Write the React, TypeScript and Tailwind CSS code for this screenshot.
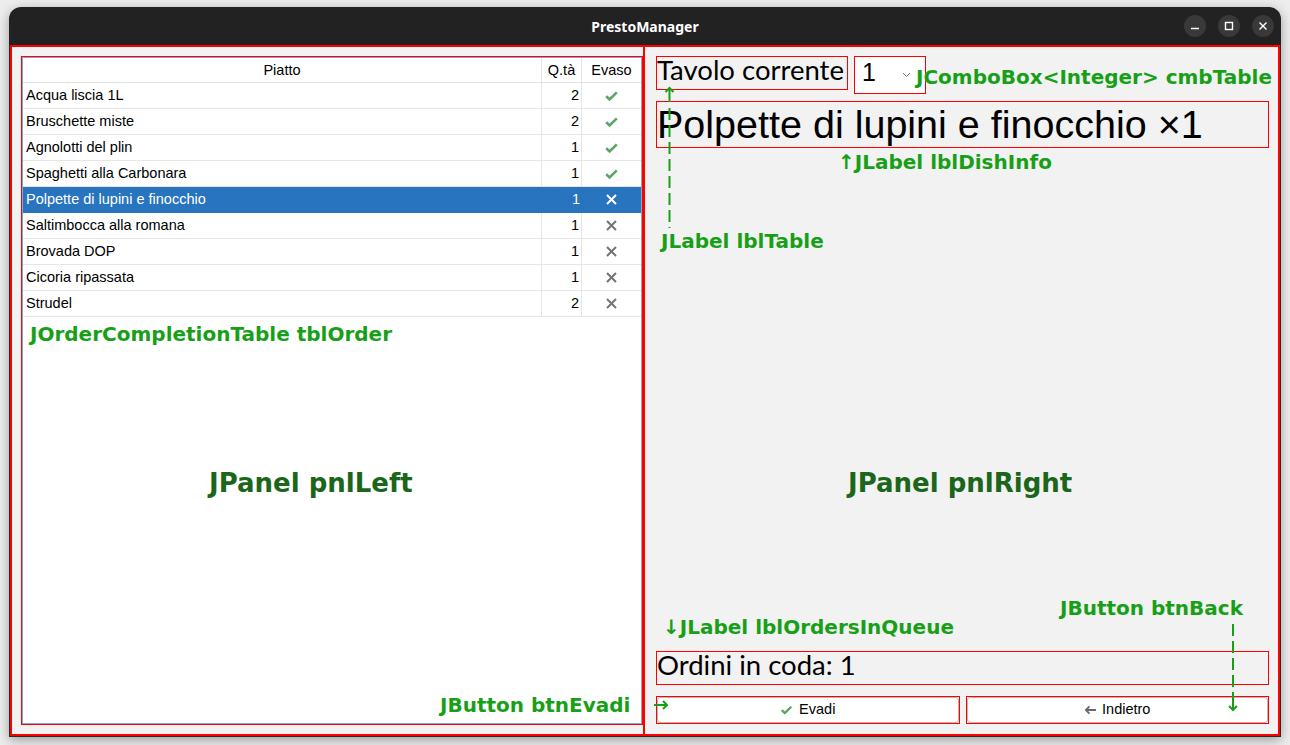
import React from "react";

type Row = { name: string; qty: number; done: boolean; sel?: boolean };

const rows: Row[] = [
  { name: "Acqua liscia 1L", qty: 2, done: true },
  { name: "Bruschette miste", qty: 2, done: true },
  { name: "Agnolotti del plin", qty: 1, done: true },
  { name: "Spaghetti alla Carbonara", qty: 1, done: true },
  { name: "Polpette di lupini e finocchio", qty: 1, done: false, sel: true },
  { name: "Saltimbocca alla romana", qty: 1, done: false },
  { name: "Brovada DOP", qty: 1, done: false },
  { name: "Cicoria ripassata", qty: 1, done: false },
  { name: "Strudel", qty: 2, done: false },
];

function Check({ className = "" }: { className?: string }) {
  return (
    <svg width="13" height="10" viewBox="0 0 13 10" className={className}>
      <path d="M1.2 5.2 L4.6 8.4 L11.8 1.4" fill="none" stroke="currentColor" strokeWidth="2.6" strokeLinejoin="miter" />
    </svg>
  );
}

function Cross({ className = "" }: { className?: string }) {
  return (
    <svg width="11" height="11" viewBox="0 0 11 11" className={className}>
      <path d="M1 1 L10 10 M10 1 L1 10" fill="none" stroke="currentColor" strokeWidth="2" />
    </svg>
  );
}

const ann = "absolute whitespace-nowrap font-bold text-[20px] leading-[24px] text-[#17a017] [font-family:'DejaVu_Sans',sans-serif]";
const annBig = "absolute whitespace-nowrap font-bold text-[26px] leading-[30px] text-[#1b661b] [font-family:'DejaVu_Sans',sans-serif]";

export default function App() {
  return (
    <div className="relative w-[1290px] h-[745px] overflow-hidden bg-[#ededed] pt-[7px] pl-[9px]">
      <div className="w-[1272px] h-[730px] flex flex-col rounded-t-[12px] overflow-hidden shadow-[0_3px_12px_rgba(0,0,0,0.35)]">
        {/* Title bar */}
        <div className="h-[38px] bg-[#222222] grid grid-cols-[1fr_auto_1fr] items-center">
          <div />
          <div className="text-white font-bold text-[14px] [font-family:'Noto_Sans',sans-serif]">PrestoManager</div>
          <div className="flex justify-end gap-[12px] pr-[7px]">
            <div className="w-[22px] h-[22px] rounded-full bg-[#393939] flex items-center justify-center">
              <svg width="10" height="10" viewBox="0 0 10 10"><path d="M1 7.5 H9" stroke="white" strokeWidth="1.4" /></svg>
            </div>
            <div className="w-[22px] h-[22px] rounded-full bg-[#393939] flex items-center justify-center">
              <svg width="10" height="10" viewBox="0 0 10 10"><rect x="1.5" y="1.5" width="7" height="7" fill="none" stroke="white" strokeWidth="1.4" /></svg>
            </div>
            <div className="w-[22px] h-[22px] rounded-full bg-[#393939] flex items-center justify-center">
              <svg width="10" height="10" viewBox="0 0 10 10"><path d="M1.5 1.5 L8.5 8.5 M8.5 1.5 L1.5 8.5" stroke="white" strokeWidth="1.4" /></svg>
            </div>
          </div>
        </div>

        {/* Content */}
        <div className="flex-1 flex border-x border-b border-[#2a2a2a] bg-[#f2f2f2]">
          {/* pnlLeft */}
          <div className="w-[635px] border-2 border-[#ff0000] pl-[9px] pt-[9px] pb-[9px] flex">
            <div className="flex-1 border border-[#ff0000] flex">
              <div className="flex-1 border border-[#86a8d2] bg-white flex flex-col [font-family:'Liberation_Sans',Arial,sans-serif] text-[14.5px] text-black">
                <div className="h-[25px] flex border-b border-[#e3e3e3]">
                  <div className="w-[519px] border-r border-[#e3e3e3] flex items-center justify-center pt-[1px]">Piatto</div>
                  <div className="w-[40px] border-r border-[#e3e3e3] flex items-center justify-center pt-[1px]">Q.tà</div>
                  <div className="flex-1 flex items-center justify-center pt-[1px]">Evaso</div>
                </div>
                {rows.map((r) => (
                  <div key={r.name} className={`h-[26px] flex border-b ${r.sel ? "bg-[#2874be] text-white border-[#2874be]" : "border-[#e6e6e6]"}`}>
                    <div className={`w-[519px] flex items-center pl-[3px] pt-[1px] ${r.sel ? "" : "border-r border-[#e6e6e6]"}`}>{r.name}</div>
                    <div className={`w-[40px] flex items-center justify-end pr-[2px] pt-[1px] ${r.sel ? "" : "border-r border-[#e6e6e6]"}`}>{r.qty}</div>
                    <div className="flex-1 flex items-center justify-center">
                      {r.done ? (
                        <Check className="text-[#5aa566]" />
                      ) : (
                        <Cross className={r.sel ? "text-white" : "text-[#747474]"} />
                      )}
                    </div>
                  </div>
                ))}
                <div className="flex-1" />
              </div>
            </div>
          </div>

          {/* pnlRight */}
          <div className="flex-1 border-2 border-l-0 border-[#ff0000] pl-[11px] pr-[9px] pt-[9px] pb-[10px] flex flex-col">
            <div className="flex items-start gap-[6px]">
              <div className="w-[192px] h-[34px] border border-[#ff0000] flex items-center pb-[7px] text-[27.5px] text-black [font-family:'Lato',sans-serif] whitespace-nowrap overflow-visible">
                Tavolo corrente
              </div>
              <div className="w-[72px] h-[38px] border border-[#ff0000] bg-white flex items-center justify-between pl-[7px] pr-[14px] pb-[4px] [font-family:'Liberation_Sans',Arial,sans-serif] text-[25px] text-black">
                <span>1</span>
                <svg width="9" height="6" viewBox="0 0 9 6" className="mt-[4px]"><path d="M1 1 L4.5 4.5 L8 1" fill="none" stroke="#777" strokeWidth="1" /></svg>
              </div>
            </div>
            <div className="mt-[7px] h-[47px] border border-[#ff0000] flex items-center text-[39.5px] text-black [font-family:'Liberation_Sans',Arial,sans-serif] whitespace-nowrap">
              Polpette di lupini e finocchio ×1
            </div>
            <div className="flex-1" />
            <div className="h-[34px] border border-[#ff0000] flex items-center pb-[7px] text-[27.5px] text-black [font-family:'Lato',sans-serif]">
              Ordini in coda: 1
            </div>
            <div className="mt-[11px] flex gap-[6px] h-[28px]">
              <div className="flex-1 border border-[#ff0000] flex">
                <div className="flex-1 bg-white border border-[#b8b8b8] rounded-[3px] flex items-center justify-center gap-[6px] [font-family:'Liberation_Sans',Arial,sans-serif] text-[14.5px] text-black">
                  <Check className="text-[#5aa566] scale-90" />
                  <span>Evadi</span>
                </div>
              </div>
              <div className="flex-1 border border-[#ff0000] flex">
                <div className="flex-1 bg-white border border-[#b8b8b8] rounded-[3px] flex items-center justify-center gap-[5px] [font-family:'Liberation_Sans',Arial,sans-serif] text-[14.5px] text-black">
                  <svg width="13" height="10" viewBox="0 0 13 10"><path d="M12 5 H2 M5.5 1.3 L1.8 5 L5.5 8.7" fill="none" stroke="#6a6a6a" strokeWidth="1.8" /></svg>
                  <span>Indietro</span>
                </div>
              </div>
            </div>
          </div>
        </div>
      </div>

      {/* Annotations overlay */}
      <div className={ann} style={{ left: 916, top: 65 }}>JComboBox&lt;Integer&gt; cmbTable</div>
      <div className={ann} style={{ left: 838, top: 150 }}>↑JLabel lblDishInfo</div>
      <div className={ann} style={{ left: 661, top: 229 }}>JLabel lblTable</div>
      <div className={ann} style={{ left: 30, top: 322 }}>JOrderCompletionTable tblOrder</div>
      <div className={annBig} style={{ left: 209, top: 468 }}>JPanel pnlLeft</div>
      <div className={annBig} style={{ left: 848, top: 468 }}>JPanel pnlRight</div>
      <div className={ann} style={{ left: 1060, top: 596 }}>JButton btnBack</div>
      <div className={ann} style={{ left: 663, top: 615 }}>↓JLabel lblOrdersInQueue</div>
      <div className={ann} style={{ left: 440, top: 693 }}>JButton btnEvadi</div>

      {/* lblTable arrow */}
      <svg className="absolute" style={{ left: 660, top: 86 }} width="20" height="145" viewBox="0 0 20 145">
        <path d="M9.5 2 V16" stroke="#17a017" strokeWidth="2" />
        <path d="M5.5 6 L9.5 2 L13.5 6" fill="none" stroke="#17a017" strokeWidth="2" />
        <path d="M9.5 22 V142" stroke="#17a017" strokeWidth="2" strokeDasharray="12 5" />
      </svg>
      {/* btnBack arrow */}
      <svg className="absolute" style={{ left: 1223, top: 622 }} width="20" height="92" viewBox="0 0 20 92">
        <path d="M10 2 V82" stroke="#17a017" strokeWidth="2" strokeDasharray="12 5" />
        <path d="M10 76 V88" stroke="#17a017" strokeWidth="2" />
        <path d="M6 84 L10 88 L14 84" fill="none" stroke="#17a017" strokeWidth="2" />
      </svg>
      {/* btnEvadi arrow */}
      <svg className="absolute" style={{ left: 652, top: 698 }} width="18" height="14" viewBox="0 0 18 14">
        <path d="M2 7 H15" stroke="#17a017" strokeWidth="2" />
        <path d="M11 3 L15 7 L11 11" fill="none" stroke="#17a017" strokeWidth="2" />
      </svg>
    </div>
  );
}
